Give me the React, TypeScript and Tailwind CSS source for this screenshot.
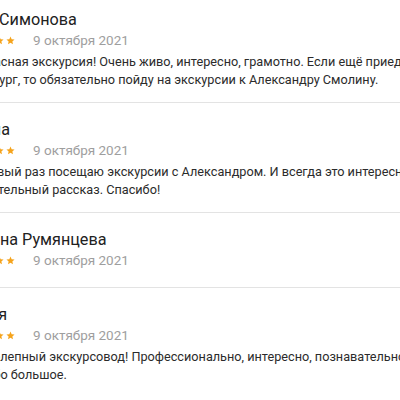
import React from "react";

const Star = () => (
  <svg viewBox="0 0 24 24" className="w-[9px] h-[9px] shrink-0" fill="#f5a31b">
    <path d="M12 1.5l3.1 7.1 7.7.7-5.8 5.1 1.7 7.6L12 18l-6.7 4 1.7-7.6-5.8-5.1 7.7-.7z" />
  </svg>
);

type Review = { name: string; lines: string[] };

const reviews: Review[] = [
  {
    name: "Анна Симонова",
    lines: [
      "Прекрасная экскурсия! Очень живо, интересно, грамотно. Если ещё приеду в",
      "Петербург, то обязательно пойду на экскурсии к Александру Смолину.",
    ],
  },
  {
    name: "Галина",
    lines: [
      "Не первый раз посещаю экскурсии с Александром. И всегда это интересный и",
      "увлекательный рассказ. Спасибо!",
    ],
  },
  { name: "Татьяна Румянцева", lines: [] },
  {
    name: "Мария",
    lines: [
      "Великолепный экскурсовод! Профессионально, интересно, познавательно. Спасибо",
      "Спасибо большое.",
    ],
  },
];

export default function App() {
  return (
    <div className="w-[400px] h-[400px] overflow-hidden bg-white font-['Roboto',sans-serif]">
      <div className="-ml-[43px] w-[700px] -mt-[8px]">
        {reviews.map((r, i) => (
          <div key={i} className="border-t border-[#e3e3e3] pt-[17px] pb-[13px]">
            <div className="text-[16.2px] leading-[20px] text-[#212121] whitespace-nowrap">{r.name}</div>
            <div className="flex items-center h-[20px]">
              <div className="flex items-center gap-[2px] ml-[5px] pt-[1px]">
                <Star />
                <Star />
                <Star />
                <Star />
                <Star />
              </div>
              <div className="ml-[18px] text-[13.5px] leading-[20px] text-[#9e9e9e] whitespace-nowrap">9 октября 2021</div>
            </div>
            {r.lines.length > 0 ? (
              <div className="mt-[3px] text-[12.7px] leading-[18px] text-[#2b2b2b]">
                {r.lines.map((l, j) => (
                  <div key={j} className="whitespace-nowrap">{l}</div>
                ))}
              </div>
            ) : (
              <div className="h-[4px]" />
            )}
          </div>
        ))}
      </div>
    </div>
  );
}
